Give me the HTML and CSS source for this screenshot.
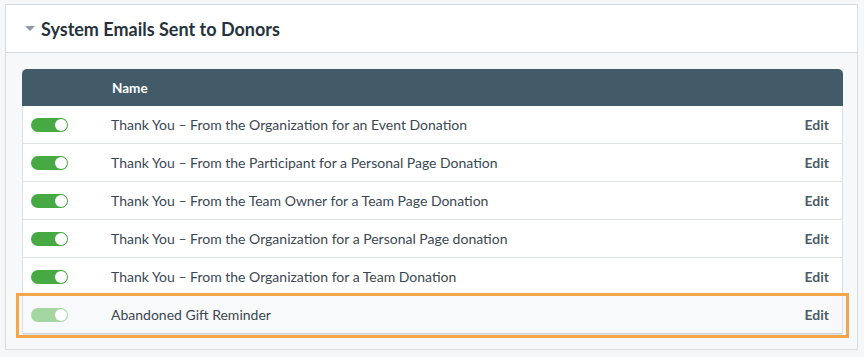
FILE: index.html
```html
<!DOCTYPE html>
<html>
<head>
<meta charset="utf-8">
<link rel="stylesheet" href="styles.css">
</head>
<body>
<div class="card">
  <div class="card-header">
    <span class="caret"></span>
    <h2 class="title">System Emails Sent to Donors</h2>
  </div>
  <div class="card-body">
    <div class="table">
      <div class="thead">
        <div class="col-toggle"></div>
        <div class="col-name">Name</div>
        <div class="col-edit"></div>
      </div>
      <div class="row">
        <div class="col-toggle"><span class="switch on"><span class="knob"></span></span></div>
        <div class="col-name">Thank You – From the Organization for an Event Donation</div>
        <div class="col-edit"><a class="edit">Edit</a></div>
      </div>
      <div class="row">
        <div class="col-toggle"><span class="switch on"><span class="knob"></span></span></div>
        <div class="col-name">Thank You – From the Participant for a Personal Page Donation</div>
        <div class="col-edit"><a class="edit">Edit</a></div>
      </div>
      <div class="row">
        <div class="col-toggle"><span class="switch on"><span class="knob"></span></span></div>
        <div class="col-name">Thank You – From the Team Owner for a Team Page Donation</div>
        <div class="col-edit"><a class="edit">Edit</a></div>
      </div>
      <div class="row">
        <div class="col-toggle"><span class="switch on"><span class="knob"></span></span></div>
        <div class="col-name">Thank You – From the Organization for a Personal Page donation</div>
        <div class="col-edit"><a class="edit">Edit</a></div>
      </div>
      <div class="row">
        <div class="col-toggle"><span class="switch on"><span class="knob"></span></span></div>
        <div class="col-name">Thank You – From the Organization for a Team Donation</div>
        <div class="col-edit"><a class="edit">Edit</a></div>
      </div>
      <div class="row row-last">
        <div class="col-toggle"><span class="switch faded"><span class="knob"></span></span></div>
        <div class="col-name">Abandoned Gift Reminder</div>
        <div class="col-edit"><a class="edit">Edit</a></div>
        <span class="highlight"></span>
      </div>
    </div>
  </div>
</div>
</body>
</html>
```

FILE: styles.css
```css
* { box-sizing: border-box; }
html, body {
  margin: 0;
  padding: 0;
  background: #f5f7f9;
  font-family: Lato, "Open Sans", sans-serif;
  color: #3a4852;
}
body { padding: 4px 6px 0 5px; }

.card {
  width: 853px;
  height: 346px;
  border: 1px solid #d7dee3;
  background: #f6f8fa;
}
.card-header {
  height: 48px;
  background: #fff;
  border-bottom: 1px solid #d3dbe0;
  display: flex;
  align-items: center;
  padding-left: 19px;
}
.caret {
  width: 0;
  height: 0;
  border-left: 5px solid transparent;
  border-right: 5px solid transparent;
  border-top: 5px solid #8e9aa3;
  margin-right: 6px;
  margin-top: -1px;
}
.title {
  margin: 0;
  font-size: 18px;
  font-weight: 700;
  color: #26333d;
}
.card-body {
  padding: 16px 15px 0 16px;
}
.table {
  width: 821px;
  border-left: 1px solid #dbe1e5;
  border-right: 1px solid #dbe1e5;
}
.thead {
  height: 37px;
  background: #435a69;
  border-radius: 5px 5px 0 0;
  margin: 0 -1px;
  display: flex;
  align-items: center;
  color: #fff;
  font-weight: 700;
  font-size: 13.5px;
}
.thead .col-name { padding-left: 2px; }
.row {
  position: relative;
  height: 38px;
  background: #fff;
  border-bottom: 1px solid #dde3e7;
  display: flex;
  align-items: center;
  font-size: 14px;
}
.col-toggle {
  width: 88px;
  padding-left: 8px;
  display: flex;
  align-items: center;
}
.col-name {
  flex: 1;
}
.col-edit {
  width: 60px;
  text-align: right;
  padding-right: 13px;
}
.edit {
  font-weight: 700;
  color: #4a5c69;
}
.switch {
  position: relative;
  display: block;
  width: 37px;
  height: 14px;
  border-radius: 7px;
}
.switch.on { background: #46a944; }
.switch.faded { background: #a3d6a1; }
.knob {
  position: absolute;
  top: 1px;
  right: 1px;
  width: 12px;
  height: 12px;
  border-radius: 50%;
  background: #fff;
}
.row-last {
  background: #f8f9fa;
  border-bottom: 1px solid #c9d1d7;
  box-shadow: 0 1px 1px rgba(0,0,0,0.08);
}
.highlight {
  position: absolute;
  top: -3px;
  left: -7px;
  right: -7px;
  bottom: -5px;
  border: 3px solid #f5a54a;
  pointer-events: none;
}
```
